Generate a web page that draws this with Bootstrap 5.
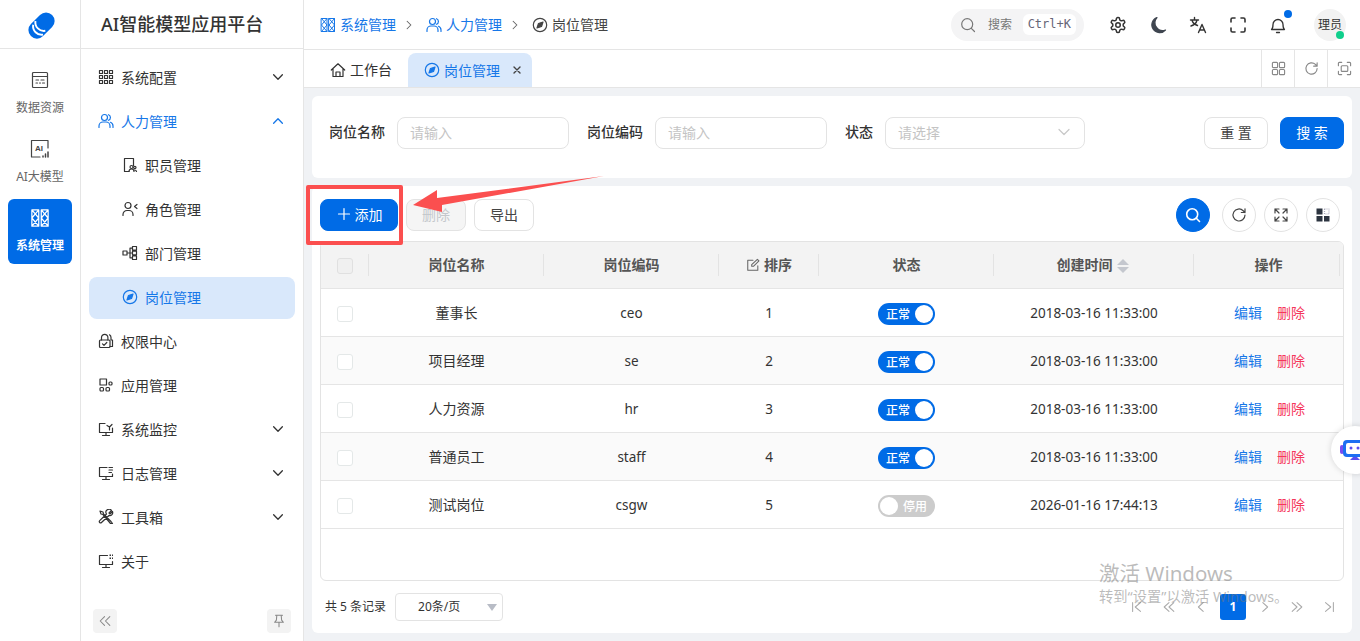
<!DOCTYPE html>
<html lang="zh-CN">
<head>
<meta charset="UTF-8">
<title>岗位管理</title>
<link href="https://cdn.jsdelivr.net/npm/bootstrap@5.3.0/dist/css/bootstrap.min.css" rel="stylesheet">
<style>
html, body { height: 100%; overflow: hidden; }
body { font-family: "Noto Sans", "Noto Sans CJK SC", sans-serif; font-size: 14px; color: #333; background: #fff; }
.ico { width: 16px; height: 16px; fill: none; stroke: currentColor; stroke-width: 1.2; stroke-linecap: round; stroke-linejoin: round; flex: none; }
.app-shell { height: 641px; width: 1360px; position: relative; overflow: hidden; }

/* 左侧图标栏 */
.rail { width: 81px; border-right: 1px solid #e5e5e5; flex: none; }
.rail-logo { height: 49px; border-bottom: 1px solid #e5e5e5; }
.rail-list { padding: 12px 8px 0; gap: 4px; }
.rail-item { height: 65px; border-radius: 6px; font-size: 12px; color: #666; gap: 9px; }
.rail-item .ico { width: 20px; height: 20px; color: #444; }
.rail-item.is-on { background: #006be6; color: #fff; font-weight: 700; }
.rail-item.is-on .ico { color: #fff; stroke-width: 1; }

/* 菜单 */
.side { width: 223px; border-right: 1px solid #e5e5e5; flex: none; }
.side-title { height: 49px; border-bottom: 1px solid #e5e5e5; font-size: 18px; font-weight: 500; color: #333; padding-left: 20px; }
.side-nav { padding: 8px 8px 0; gap: 2px; }
.side-link { height: 42px; padding: 0 10px 2px 9px; border-radius: 8px; color: #333; gap: 7px; }
.side-link.is-sub { padding-left: 33px; }
.side-link.is-open { color: #1677e8; }
.side-link.is-on { background: #d9e8fb; color: #1677e8; }
.side-arrow { width: 14px; height: 14px; margin-left: auto; stroke-width: 1.5; }
.side-foot { padding: 0 12px 8px; }
.side-tool { width: 24px; height: 24px; border-radius: 4px; background: #f3f3f3; color: #888; }
.side-tool .ico { width: 14px; height: 14px; }

/* 顶栏 */
.top-bar { height: 50px; border-bottom: 1px solid #e5e5e5; padding-left: 16px; flex: none; }
.crumb { gap: 4px; color: #1677e8; }
.crumb.is-last { color: #444; }
.crumb-sys { stroke-width: 1; }
.crumb-sep { width: 12px; height: 12px; margin: 0 11px 0 7px; color: #666; stroke-width: 1.4; }
.search-pill { width: 133px; height: 32px; border-radius: 16px; background: #f4f4f5; color: #777; font-size: 12px; padding: 0 8px 0 9px; margin-right: 14px; }
.search-pill kbd { background: #fff; color: #667; font-family: "DejaVu Sans Mono", monospace; font-size: 12px; padding: 3px 5px; border-radius: 6px; margin-left: auto; box-shadow: none; line-height: 15px; }
.top-ico { width: 40px; position: relative; color: #333; }
.top-ico .ico { width: 18px; height: 18px; }
.top-dot { position: absolute; width: 8px; height: 8px; border-radius: 50%; background: #006be6; top: -6px; right: 6px; }
.avatar { width: 32px; height: 32px; border-radius: 50%; background: #f2f2f2; font-size: 12px; position: relative; margin: 0 14px 0 16px; }
.avatar-dot { position: absolute; width: 8px; height: 8px; border-radius: 50%; background: #10cf8c; right: 2px; bottom: 2px; }

/* 标签栏 */
.tab-bar { height: 38px; border-bottom: 1px solid #e5e5e5; flex: none; }
.tab-home { width: 104px; padding: 2px 0 0 26px; gap: 4px; color: #333; }
.tab-item { width: 124px; height: 34px; margin-top: 3px; background: #d9e8fb; border-radius: 8px 8px 0 0; padding-left: 16px; gap: 4px; color: #1677e8; }
.tab-close { width: 10px; height: 10px; margin-left: 8px; color: #444; stroke-width: 1.4; }
.tab-tool { width: 33px; height: 37px; border-left: 1px solid #e5e5e5; color: #888; }
.tab-tool .ico { width: 15px; height: 15px; }

/* 内容 */
.page-body { background: #f0f2f5; padding: 8px; gap: 8px; min-height: 0; }
.panel { background: #fff; border-radius: 6px; }
.filter-panel { height: 82px; padding: 21px 8px 0 17px; flex: none; }
.filter-label { font-weight: 500; color: #333; margin-right: 12px; line-height: 30px; }
.filter-input { width: 172px; height: 32px; border: 1px solid #e3e3e3; border-radius: 8px; padding: 0 12px 2px; color: #c4c4c4; margin-right: 18px; }
.filter-input.is-select { width: 200px; }
.btn-plain, .btn-brand, .btn-off { height: 32px; padding: 0 0 2px; border-radius: 8px; font-size: 14px; display: inline-flex; align-items: center; justify-content: center; }
.btn-plain { --bs-btn-color: #444; --bs-btn-border-color: #e3e3e3; --bs-btn-bg: #fff; }
.btn-brand { --bs-btn-color: #fff; --bs-btn-bg: #006be6; --bs-btn-border-color: #006be6; }
.btn-off { --bs-btn-disabled-color: #c4c8cc; --bs-btn-disabled-bg: #f5f5f5; --bs-btn-disabled-border-color: #e3e3e3; --bs-btn-disabled-opacity: 1; }
.w-64 { width: 64px; } .w-60 { width: 60px; } .w-78 { width: 78px; gap: 3px; }

.table-panel { height: 447px; padding: 12px 8px 0; flex: none; }
.tool-row { height: 34px; margin-bottom: 9px; padding-right: 4px; }
.round-btn { width: 34px; height: 34px; border-radius: 50%; border: 1px solid #e3e3e3; color: #444; background: #fff; }
.round-btn .ico { width: 16px; height: 16px; }
.round-btn.is-on { background: #006be6; border-color: #006be6; color: #fff; margin-right: 4px; }

.grid-box { height: 340px; border: 1px solid #e3e3e3; border-radius: 6px; overflow: hidden; }
.data-table { table-layout: fixed; width: 1022px; --bs-table-bg: transparent; --bs-table-border-color: #e5e5e5; }
.data-table th { height: 46px; background: #f3f3f3; color: #555; font-weight: 600; text-align: center; vertical-align: middle; padding: 0; position: relative; }
.data-table th::after { content: ""; position: absolute; right: 0; top: 12px; bottom: 12px; width: 1px; background: #e3e3e3; }
.data-table th:last-child::after { right: 3px; }
.data-table td { height: 48px; text-align: center; vertical-align: middle; padding: 0; color: #333; }
.data-table tr.is-alt td { background: #fafafa; }
.data-table td.cell-latin { font-size: 13.5px; padding-top: 2px; }
.data-table td.cell-act { padding-left: 2px; }
.row-check { display: inline-block; width: 16px; height: 16px; border: 1px solid #e4e8e8; border-radius: 3px; background: #fff; vertical-align: middle; }
th .row-check { background: #f0f0f0; border-color: #e0e0e0; }
.sort-mark { display: inline-flex; flex-direction: column; gap: 2px; vertical-align: middle; margin: 0 3px 0 4px; }
.sort-mark i { display: block; width: 0; height: 0; border-left: 6px solid transparent; border-right: 6px solid transparent; }
.sort-mark i:first-child { border-bottom: 6px solid #c4c7ce; }
.sort-mark i:last-child { border-top: 6px solid #c4c7ce; }
.state { display: inline-flex; align-items: center; width: 57px; height: 22px; margin-top: 4px; border-radius: 11px; background: #006be6; color: #fff; font-size: 12px; font-weight: 500; padding: 2px 2px 0 8px; justify-content: space-between; vertical-align: middle; }
.state::after { content: ""; width: 18px; height: 18px; margin-top: -2px; border-radius: 50%; background: #fff; }
.state.is-off { background: #ccc; flex-direction: row-reverse; padding: 2px 8px 0 2px; }
.act-edit { color: #1677e8; text-decoration: none; margin-right: 15px; }
.act-del { color: #f5365c; text-decoration: none; }

.pager-row { height: 52px; padding: 0 2px 0 5px; font-size: 12px; color: #333; }
.size-pick { width: 108px; height: 28px; border: 1px solid #e3e3e3; border-radius: 4px; margin-left: 9px; position: relative; padding-left: 22px; }
.size-pick::after { content: ""; position: absolute; right: 5px; top: 10px; border-left: 5px solid transparent; border-right: 5px solid transparent; border-top: 7px solid #b8bcc6; }
.pager-btn { width: 26px; height: 26px; color: #aaa; margin-left: 6px; }
.pager-btn .ico { width: 14px; height: 14px; }
.pager-btn.is-on { background: #006be6; color: #fff; border-radius: 3px; font-weight: 700; }

/* 覆盖层：标注、水印、悬浮按钮 */
.mark-box { position: absolute; left: 306px; top: 185px; width: 97px; height: 60px; border: 4px solid #fb4f4f; border-radius: 2px; pointer-events: none; }
.mark-arrow { position: absolute; left: 404px; top: 170px; width: 210px; height: 50px; }
.win-mark { position: absolute; left: 1099px; top: 563px; color: rgba(120,120,120,.5); line-height: 1; pointer-events: none; }
.win-mark b { display: block; font-weight: 400; font-size: 20.5px; margin-bottom: 6px; }
.win-mark span { font-size: 14.3px; white-space: nowrap; }
.bot-float { position: absolute; left: 1331px; top: 426px; width: 48px; height: 48px; border-radius: 50%; background: #fff; box-shadow: 0 0 6px rgba(0,0,0,.15); padding: 13px 0 0 9px; }
</style>
</head>
<body>
<svg width="0" height="0" class="position-absolute">
  <symbol id="i-down" viewBox="0 0 16 16"><path d="M3 5.500l5 5 5-5"/></symbol>
  <symbol id="i-up" viewBox="0 0 16 16"><path d="M3 10.500l5-5 5 5"/></symbol>
  <symbol id="i-right" viewBox="0 0 16 16"><path d="M5.500 3l5 5-5 5"/></symbol>
  <symbol id="i-grid9" viewBox="0 0 16 16"><path d="M1.500 1.500h3v3h-3zM6.500 1.500h3v3h-3zM11.500 1.500h3v3h-3zM1.500 6.500h3v3h-3zM6.500 6.500h3v3h-3zM11.500 6.500h3v3h-3zM1.500 11.500h3v3h-3zM6.500 11.500h3v3h-3zM11.500 11.500h3v3h-3z"/></symbol>
  <symbol id="i-users" viewBox="0 0 16 16"><circle cx="6.500" cy="4.500" r="3"/><path d="M1 14.500v-1.500a4 4 0 0 1 4-4h3a4 4 0 0 1 4 4v1.500M10.500 1.700a3 3 0 0 1 0 5.600M12.500 9.300a4 4 0 0 1 2.500 3.700v1.500"/></symbol>
  <symbol id="i-staff" viewBox="0 0 16 16"><path d="M7 14.500H2.500v-13h9v7"/><circle cx="9.500" cy="10" r="1.500"/><circle cx="12.800" cy="10.500" r="1.200"/><path d="M7 14.500a2.500 2.500 0 0 1 5 0M12.500 13a2 2 0 0 1 2 1.500"/></symbol>
  <symbol id="i-role" viewBox="0 0 16 16"><circle cx="6" cy="4.500" r="3"/><path d="M1 14.500v-1a4 4 0 0 1 4-4h2a4 4 0 0 1 4 4v1M15 3.500l-2.500 2 2.500 2"/></symbol>
  <symbol id="i-org" viewBox="0 0 16 16"><path d="M1 6h4v4H1zM10.500 1.500h4v3.500h-4zM10.500 6.200h4v3.600h-4zM10.500 11h4v3.500h-4zM5 8h5.500M8 3.200V12.800M8 3.200h2.500M8 12.800h2.500"/></symbol>
  <symbol id="i-compass" viewBox="0 0 16 16"><circle cx="8" cy="8" r="6.700"/><path d="M11 5l-1.500 4.500L5 11l1.500-4.500z" fill="currentColor"/></symbol>
  <symbol id="i-lock" viewBox="0 0 16 16"><rect x="1.500" y="7" width="10.500" height="7.500" rx="1"/><path d="M3.500 7V4.500a3.200 3.200 0 0 1 6.400 0V7M11.500 1.800a3.200 3.200 0 0 1 1.500 2.700V7h1.500v6.500H12M4.500 10.800l1.500 1.500 2.800-2.800"/></symbol>
  <symbol id="i-apps" viewBox="0 0 16 16"><path d="M2 2h6.500v6H2z"/><rect x="2" y="10.500" width="3.500" height="3.500" rx="1"/><rect x="8" y="10.500" width="3.500" height="3.500" rx="1"/><rect x="11" y="5" width="3" height="3" rx="1"/></symbol>
  <symbol id="i-mon-a" viewBox="0 0 16 16"><path d="M7 2.500H1.500v9h13V7M8 11.500V14.500M4.500 14.500h7M9 4.500l2.500 1.500 2.500-2.500M11.500 6v3"/></symbol>
  <symbol id="i-mon-b" viewBox="0 0 16 16"><path d="M9 2.500H1.500v9h13V9M8 11.500V14.500M4.500 14.500h7M11 2.500h3.500M11 5h3.500M11 7.500h2.500"/></symbol>
  <symbol id="i-tools" viewBox="0 0 16 16"><path d="M2 2l3 1 .5 2L13 12.500l1.500 2-2 0L5 5.500 3 5zM13.500 1.500l-2.500 2.500 1 1 2.500-2.500a3 3 0 0 1-3.500 4L3.500 13.500a1.200 1.200 0 0 1-1.800-1.800L8.500 5a3 3 0 0 1 5-3.500z"/></symbol>
  <symbol id="i-mon-c" viewBox="0 0 16 16"><path d="M9.500 2.500h-8v9h13V8.500M8 11.500V14.500M4.500 14.500h7"/><path d="M11.500 1.500h1.500v1.500h-1.500zM14 1.500h1v1.500h-1zM11.500 4.500h1.500v1.500h-1.500zM14 4.500h1v1.500h-1z" fill="currentColor" stroke="none"/></symbol>
  <symbol id="i-data" viewBox="0 0 20 20"><rect x="2.500" y="2.500" width="15" height="15" rx="1"/><path d="M2.500 6.500h15M6 10h2.500M11 10h3M6 13h1.500M9.500 13h1M12.500 13h2"/></symbol>
  <symbol id="i-sys" viewBox="0 0 16 16"><path d="M1.500 1.500h5.500v13H1.500zM9 1.500h5.500v13H9zM1.500 1.500L7 8 1.500 14.500M7 1.500L1.500 8 7 14.500M9 1.500L14.500 8 9 14.500M14.500 1.500L9 8l5.500 6.500"/></symbol>
  <symbol id="i-search" viewBox="0 0 16 16"><circle cx="7.200" cy="7.200" r="5.500"/><path d="M11.300 11.300l3.200 3.200"/></symbol>
  <symbol id="i-gear" viewBox="0 0 24 24"><path d="M12.220 2h-.44a2 2 0 0 0-2 2v.18a2 2 0 0 1-1 1.730l-.43.250a2 2 0 0 1-2 0l-.15-.08a2 2 0 0 0-2.730.730l-.22.380a2 2 0 0 0 .730 2.730l.15.100a2 2 0 0 1 1 1.720v.510a2 2 0 0 1-1 1.740l-.15.090a2 2 0 0 0-.730 2.730l.22.380a2 2 0 0 0 2.730.730l.15-.08a2 2 0 0 1 2 0l.43.250a2 2 0 0 1 1 1.730V20a2 2 0 0 0 2 2h.44a2 2 0 0 0 2-2v-.18a2 2 0 0 1 1-1.730l.43-.25a2 2 0 0 1 2 0l.15.080a2 2 0 0 0 2.730-.730l.22-.39a2 2 0 0 0-.730-2.730l-.15-.08a2 2 0 0 1-1-1.740v-.5a2 2 0 0 1 1-1.740l.15-.09a2 2 0 0 0 .730-2.730l-.22-.38a2 2 0 0 0-2.730-.730l-.15.080a2 2 0 0 1-2 0l-.43-.25a2 2 0 0 1-1-1.730V4a2 2 0 0 0-2-2z" stroke-width="2"/><circle cx="12" cy="12" r="3" stroke-width="2"/></symbol>
  <symbol id="i-moon" viewBox="0 0 18 18"><path d="M8 1.500a7.800 7.800 0 0 0 8.500 12.500A7.800 7.800 0 1 1 8 1.500z" fill="#3f4650" stroke="#3f4650"/></symbol>
  <symbol id="i-lang" viewBox="0 0 18 18"><path d="M1.500 4h8M5.500 1.500V4M3 4c.5 2.500 2.500 4.500 5.500 5.500M8 4c-.5 2.500-2.500 5-6 6M9.500 16.500l3.500-8 3.500 8M10.700 14h4.600" stroke-width="1.400"/></symbol>
  <symbol id="i-full" viewBox="0 0 18 18"><path d="M2 6V3.500A1.500 1.500 0 0 1 3.500 2H6M12 2h2.500A1.500 1.500 0 0 1 16 3.500V6M16 12v2.500a1.500 1.500 0 0 1-1.500 1.500H12M6 16H3.500A1.500 1.500 0 0 1 2 14.500V12" stroke-width="1.600"/></symbol>
  <symbol id="i-bell" viewBox="0 0 18 18"><path d="M2.500 13.500c1.500-1 1.500-2.500 1.500-5a5 5 0 0 1 10 0c0 2.500 0 4 1.500 5zM7.500 16.500h3" stroke-width="1.300"/></symbol>
  <symbol id="i-home" viewBox="0 0 16 16"><path d="M1.300 8L8 1.800 14.700 8M3 6.500v8h10v-8M6 14.500V10h4v4.500"/></symbol>
  <symbol id="i-x" viewBox="0 0 10 10"><path d="M2 2l6 6M8 2L2 8"/></symbol>
  <symbol id="i-quad" viewBox="0 0 16 16"><rect x="1.500" y="1.500" width="5.500" height="5.500" rx="1"/><rect x="9" y="1.500" width="5.500" height="5.500" rx="1"/><rect x="1.500" y="9" width="5.500" height="5.500" rx="1"/><rect x="9" y="9" width="5.500" height="5.500" rx="1"/></symbol>
  <symbol id="i-reload" viewBox="0 0 16 16"><path d="M14 8a6 6 0 1 1-1.800-4.300L14 5.500M14 1.800v3.700h-3.700"/></symbol>
  <symbol id="i-focus" viewBox="0 0 16 16"><path d="M1.500 5V2.500a1 1 0 0 1 1-1H5M11 1.500h2.500a1 1 0 0 1 1 1V5M14.500 11v2.500a1 1 0 0 1-1 1H11M5 14.500H2.500a1 1 0 0 1-1-1V11"/><rect x="4.500" y="5" width="7" height="6" rx="1"/></symbol>
  <symbol id="i-plus" viewBox="0 0 16 16"><path d="M8 2.500v11M2.500 8h11"/></symbol>
  <symbol id="i-expand" viewBox="0 0 16 16"><path d="M2 6V2h4M2 2l4 4M10 2h4v4M14 2l-4 4M14 10v4h-4M14 14l-4-4M6 14H2v-4M2 14l4-4"/></symbol>
  <symbol id="i-blocks" viewBox="0 0 16 16"><path d="M1.500 1.500h6v6h-6zM1.500 9h6v5.500h-6zM9 9h5.500v5.500H9z" fill="#2c3440" stroke="none"/><path d="M9.500 2h4.500v5H9.500z" stroke="#aab" stroke-dasharray="1 1" stroke-linecap="butt"/></symbol>
  <symbol id="i-edit" viewBox="0 0 16 16"><path d="M13.500 9v5H2V2.500h6M6.500 9.500V7.500L13 1.500l1.800 1.800L8.500 9.500z"/></symbol>
  <symbol id="i-first" viewBox="0 0 16 16"><path d="M3 3v10M12 3L6 8l6 5"/></symbol>
  <symbol id="i-prev2" viewBox="0 0 16 16"><path d="M8 3L2.500 8 8 13M13.500 3L8 8l5.500 5"/></symbol>
  <symbol id="i-prev" viewBox="0 0 16 16"><path d="M10.500 3L5 8l5.500 5"/></symbol>
  <symbol id="i-next" viewBox="0 0 16 16"><path d="M5.500 3L11 8l-5.500 5"/></symbol>
  <symbol id="i-next2" viewBox="0 0 16 16"><path d="M2.500 3L8 8l-5.500 5M8 3l5.500 5L8 13"/></symbol>
  <symbol id="i-last" viewBox="0 0 16 16"><path d="M13 3v10M4 3l6 5-6 5"/></symbol>
  <symbol id="i-fold" viewBox="0 0 16 16"><path d="M7.500 3L2.500 8l5 5M13.500 3l-5 5 5 5"/></symbol>
  <symbol id="i-pin" viewBox="0 0 16 16"><path d="M4 1.500h8M5.500 1.500L5 7 3 9.500h10L11 7l-.5-5.500M8 9.500v5"/></symbol>
</svg>

<div class="app-shell d-flex">
  <aside class="rail d-flex flex-column">
    <div class="rail-logo d-flex align-items-center justify-content-center">
      <svg width="30" height="30" viewBox="0 0 28 28">
        <g transform="rotate(-45 14 14)">
          <rect x="0" y="8" width="28" height="16" rx="8" fill="#006be6"/>
          <path d="M7 24a8 8 0 0 1 0-13" stroke="#fff" stroke-width="1.800" fill="none" transform="translate(2 -1)"/>
          <path d="M7 24a8 8 0 0 1 0-13" stroke="#fff" stroke-width="1.800" fill="none" transform="translate(6 -2)"/>
        </g>
      </svg>
    </div>
    <div class="rail-list d-flex flex-column">
      <div class="rail-item d-flex flex-column align-items-center justify-content-center"><svg class="ico"><use href="#i-data"/></svg>数据资源</div>
      <div class="rail-item d-flex flex-column align-items-center justify-content-center">
        <svg class="ico" viewBox="0 0 20 20"><path d="M18 9V1.500H1.500V18H10"/><text x="5" y="11.500" font-size="8" font-weight="700" fill="currentColor" stroke="none" font-family="Liberation Sans, sans-serif">AI</text><path d="M13 18v-1M15.500 18v-3M18 18v-5" stroke-width="1.500"/></svg>
        AI大模型
      </div>
      <div class="rail-item is-on d-flex flex-column align-items-center justify-content-center"><svg class="ico"><use href="#i-sys"/></svg>系统管理</div>
    </div>
  </aside>

  <aside class="side d-flex flex-column">
    <div class="side-title d-flex align-items-center">AI智能模型应用平台</div>
    <nav class="side-nav d-flex flex-column flex-grow-1">
      <div class="side-link d-flex align-items-center"><svg class="ico"><use href="#i-grid9"/></svg>系统配置<svg class="ico side-arrow"><use href="#i-down"/></svg></div>
      <div class="side-link is-open d-flex align-items-center"><svg class="ico"><use href="#i-users"/></svg>人力管理<svg class="ico side-arrow"><use href="#i-up"/></svg></div>
      <div class="side-link is-sub d-flex align-items-center"><svg class="ico"><use href="#i-staff"/></svg>职员管理</div>
      <div class="side-link is-sub d-flex align-items-center"><svg class="ico"><use href="#i-role"/></svg>角色管理</div>
      <div class="side-link is-sub d-flex align-items-center"><svg class="ico"><use href="#i-org"/></svg>部门管理</div>
      <div class="side-link is-sub is-on d-flex align-items-center"><svg class="ico"><use href="#i-compass"/></svg>岗位管理</div>
      <div class="side-link d-flex align-items-center"><svg class="ico"><use href="#i-lock"/></svg>权限中心</div>
      <div class="side-link d-flex align-items-center"><svg class="ico"><use href="#i-apps"/></svg>应用管理</div>
      <div class="side-link d-flex align-items-center"><svg class="ico"><use href="#i-mon-a"/></svg>系统监控<svg class="ico side-arrow"><use href="#i-down"/></svg></div>
      <div class="side-link d-flex align-items-center"><svg class="ico"><use href="#i-mon-b"/></svg>日志管理<svg class="ico side-arrow"><use href="#i-down"/></svg></div>
      <div class="side-link d-flex align-items-center"><svg class="ico"><use href="#i-tools"/></svg>工具箱<svg class="ico side-arrow"><use href="#i-down"/></svg></div>
      <div class="side-link d-flex align-items-center"><svg class="ico"><use href="#i-mon-c"/></svg>关于</div>
    </nav>
    <div class="side-foot d-flex justify-content-between">
      <div class="side-tool d-flex align-items-center justify-content-center"><svg class="ico"><use href="#i-fold"/></svg></div>
      <div class="side-tool d-flex align-items-center justify-content-center"><svg class="ico"><use href="#i-pin"/></svg></div>
    </div>
  </aside>

  <main class="flex-grow-1 d-flex flex-column" style="min-width:0">
    <header class="top-bar d-flex align-items-center">
      <span class="crumb d-flex align-items-center"><svg class="ico crumb-sys"><use href="#i-sys"/></svg>系统管理</span>
      <svg class="ico crumb-sep"><use href="#i-right"/></svg>
      <span class="crumb d-flex align-items-center"><svg class="ico"><use href="#i-users"/></svg>人力管理</span>
      <svg class="ico crumb-sep"><use href="#i-right"/></svg>
      <span class="crumb is-last d-flex align-items-center"><svg class="ico"><use href="#i-compass"/></svg>岗位管理</span>
      <div class="search-pill d-flex align-items-center gap-2 ms-auto"><svg class="ico"><use href="#i-search"/></svg><span class="ms-1">搜索</span><kbd>Ctrl+K</kbd></div>
      <div class="top-ico d-flex justify-content-center"><svg class="ico"><use href="#i-gear"/></svg></div>
      <div class="top-ico d-flex justify-content-center"><svg class="ico"><use href="#i-moon"/></svg></div>
      <div class="top-ico d-flex justify-content-center"><svg class="ico"><use href="#i-lang"/></svg></div>
      <div class="top-ico d-flex justify-content-center"><svg class="ico"><use href="#i-full"/></svg></div>
      <div class="top-ico d-flex justify-content-center"><svg class="ico"><use href="#i-bell"/></svg><span class="top-dot"></span></div>
      <div class="avatar d-flex align-items-center justify-content-center">理员<span class="avatar-dot"></span></div>
    </header>

    <div class="tab-bar d-flex">
      <div class="tab-home d-flex align-items-center"><svg class="ico"><use href="#i-home"/></svg>工作台</div>
      <div class="tab-item d-flex align-items-center"><svg class="ico"><use href="#i-compass"/></svg>岗位管理<svg class="ico tab-close"><use href="#i-x"/></svg></div>
      <div class="tab-tool ms-auto d-flex align-items-center justify-content-center"><svg class="ico"><use href="#i-quad"/></svg></div>
      <div class="tab-tool d-flex align-items-center justify-content-center"><svg class="ico"><use href="#i-reload"/></svg></div>
      <div class="tab-tool d-flex align-items-center justify-content-center"><svg class="ico"><use href="#i-focus"/></svg></div>
    </div>

    <div class="page-body flex-grow-1 d-flex flex-column">
      <section class="panel filter-panel d-flex align-items-start">
        <span class="filter-label">岗位名称</span>
        <div class="filter-input d-flex align-items-center">请输入</div>
        <span class="filter-label">岗位编码</span>
        <div class="filter-input d-flex align-items-center">请输入</div>
        <span class="filter-label">状态</span>
        <div class="filter-input is-select d-flex align-items-center justify-content-between">请选择<svg class="ico" style="color:#c8c8c8"><use href="#i-down"/></svg></div>
        <button class="btn btn-plain w-64 ms-auto me-2 " type="button">重 置</button>
        <button class="btn btn-brand w-64 ms-1" type="button">搜 索</button>
      </section>

      <section class="panel table-panel">
        <div class="tool-row d-flex align-items-center gap-2">
          <button class="btn btn-brand w-78" type="button"><svg class="ico"><use href="#i-plus"/></svg>添加</button>
          <button class="btn btn-off w-60" type="button" disabled>删除</button>
          <button class="btn btn-plain w-60" type="button">导出</button>
          <div class="round-btn is-on ms-auto d-flex align-items-center justify-content-center"><svg class="ico" style="stroke-width:1.6"><use href="#i-search"/></svg></div>
          <div class="round-btn d-flex align-items-center justify-content-center"><svg class="ico"><use href="#i-reload"/></svg></div>
          <div class="round-btn d-flex align-items-center justify-content-center"><svg class="ico"><use href="#i-expand"/></svg></div>
          <div class="round-btn d-flex align-items-center justify-content-center"><svg class="ico"><use href="#i-blocks"/></svg></div>
        </div>

        <div class="grid-box">
          <table class="table data-table mb-0">
            <colgroup><col style="width:48px"><col style="width:175px"><col style="width:175px"><col style="width:100px"><col style="width:175px"><col style="width:200px"><col style="width:149px"></colgroup>
            <thead>
              <tr>
                <th><span class="row-check"></span></th>
                <th>岗位名称</th>
                <th>岗位编码</th>
                <th><svg class="ico me-1" style="width:14px;height:14px;vertical-align:-2px;color:#666"><use href="#i-edit"/></svg>排序</th>
                <th>状态</th>
                <th>创建时间<span class="sort-mark"><i></i><i></i></span></th>
                <th>操作</th>
              </tr>
            </thead>
            <tbody>
              <tr><td><span class="row-check"></span></td><td>董事长</td><td class="cell-latin">ceo</td><td class="cell-latin">1</td><td><span class="state">正常</span></td><td class="cell-latin">2018-03-16 11:33:00</td><td class="cell-act"><a class="act-edit" href="#">编辑</a><a class="act-del" href="#">删除</a></td></tr>
              <tr class="is-alt"><td><span class="row-check"></span></td><td>项目经理</td><td class="cell-latin">se</td><td class="cell-latin">2</td><td><span class="state">正常</span></td><td class="cell-latin">2018-03-16 11:33:00</td><td class="cell-act"><a class="act-edit" href="#">编辑</a><a class="act-del" href="#">删除</a></td></tr>
              <tr><td><span class="row-check"></span></td><td>人力资源</td><td class="cell-latin">hr</td><td class="cell-latin">3</td><td><span class="state">正常</span></td><td class="cell-latin">2018-03-16 11:33:00</td><td class="cell-act"><a class="act-edit" href="#">编辑</a><a class="act-del" href="#">删除</a></td></tr>
              <tr class="is-alt"><td><span class="row-check"></span></td><td>普通员工</td><td class="cell-latin">staff</td><td class="cell-latin">4</td><td><span class="state">正常</span></td><td class="cell-latin">2018-03-16 11:33:00</td><td class="cell-act"><a class="act-edit" href="#">编辑</a><a class="act-del" href="#">删除</a></td></tr>
              <tr><td><span class="row-check"></span></td><td>测试岗位</td><td class="cell-latin">csgw</td><td class="cell-latin">5</td><td><span class="state is-off">停用</span></td><td class="cell-latin">2026-01-16 17:44:13</td><td class="cell-act"><a class="act-edit" href="#">编辑</a><a class="act-del" href="#">删除</a></td></tr>
            </tbody>
          </table>
        </div>

        <div class="pager-row d-flex align-items-center">
          <span>共 5 条记录</span>
          <div class="size-pick d-flex align-items-center">20条/页</div>
          <div class="ms-auto d-flex align-items-center">
            <div class="pager-btn d-flex align-items-center justify-content-center"><svg class="ico"><use href="#i-first"/></svg></div>
            <div class="pager-btn d-flex align-items-center justify-content-center"><svg class="ico"><use href="#i-prev2"/></svg></div>
            <div class="pager-btn d-flex align-items-center justify-content-center"><svg class="ico"><use href="#i-prev"/></svg></div>
            <div class="pager-btn is-on d-flex align-items-center justify-content-center">1</div>
            <div class="pager-btn d-flex align-items-center justify-content-center"><svg class="ico"><use href="#i-next"/></svg></div>
            <div class="pager-btn d-flex align-items-center justify-content-center"><svg class="ico"><use href="#i-next2"/></svg></div>
            <div class="pager-btn d-flex align-items-center justify-content-center"><svg class="ico"><use href="#i-last"/></svg></div>
          </div>
        </div>
      </section>
    </div>
  </main>

  <div class="mark-box"></div>
  <svg class="mark-arrow" viewBox="0 0 210 50"><path d="M200 6L38 35 38 42 9 35 33 20 33 28z" fill="#fb4f4f"/></svg>
  <div class="win-mark"><b>激活 Windows</b><span>转到“设置”以激活 Windows。</span></div>
  <div class="bot-float">
    <svg width="26" height="24" viewBox="0 0 26 24"><rect x="0" y="6" width="4" height="9" rx="2" fill="#7a4df0"/><rect x="3" y="1" width="23" height="17" rx="4" fill="#1d6ff2"/><rect x="6" y="4" width="20" height="11" rx="2" fill="#fff"/><circle cx="11" cy="9" r="1.500" fill="#5b4df0"/><circle cx="18" cy="9" r="1.500" fill="#5b4df0"/><path d="M10 21h10l-3-3h-4z" fill="#5b4df0"/></svg>
  </div>
</div>
<script src="https://cdn.jsdelivr.net/npm/bootstrap@5.3.0/dist/js/bootstrap.bundle.min.js"></script>
</body>
</html>
